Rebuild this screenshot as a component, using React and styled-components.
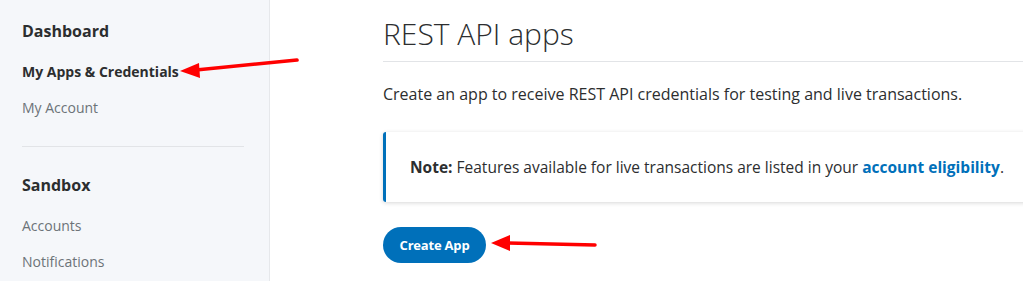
import styled, { createGlobalStyle } from "styled-components"

const GlobalStyle = createGlobalStyle`
    html, body {
        margin: 0;
        padding: 0;
        background: #ffffff;
    }
    body {
        font-family: "Open Sans", Lato, sans-serif;
        color: #2c2e2f;
        overflow: hidden;
    }
`

export default function App() {
    return (
        <Page>
            <GlobalStyle />

            <Sidebar>
                <NavGroup>
                    <NavTitle>Dashboard</NavTitle>
                    <NavLink $active>My Apps &amp; Credentials</NavLink>
                    <NavLink>My Account</NavLink>
                </NavGroup>
                <NavDivider />
                <NavGroup>
                    <NavTitle>Sandbox</NavTitle>
                    <NavLink>Accounts</NavLink>
                    <NavLink>Notifications</NavLink>
                </NavGroup>
            </Sidebar>

            <Main>
                <Title>REST API apps</Title>
                <Intro>Create an app to receive REST API credentials for testing and live transactions.</Intro>

                <NoteBox>
                    <strong>Note:</strong> Features available for live transactions are listed in your{" "}
                    <a>account eligibility</a>.
                </NoteBox>

                <CreateButton>Create App</CreateButton>
            </Main>

            <Annotations width="1023" height="281" viewBox="0 0 1023 281">
                <line x1="297" y1="60" x2="196" y2="70" stroke="#f00" strokeWidth="3.5" strokeLinecap="round" />
                <polygon points="180,71 199,63 200,78" fill="#f00" />
                <line x1="595" y1="245" x2="508" y2="243" stroke="#f00" strokeWidth="3.5" strokeLinecap="round" />
                <polygon points="491,243 510,235 510,251" fill="#f00" />
            </Annotations>
        </Page>
    )
}

const Page = styled.div`
    position: relative;
    display: flex;
    width: 1023px;
    height: 281px;
    overflow: hidden;
`

const Sidebar = styled.nav`
    width: 270px;
    flex-shrink: 0;
    background-color: #f5f7fa;
    border-right: 1px solid #e6e8eb;
    padding: 20px 25px 0 22px;
    box-sizing: border-box;
`

const NavGroup = styled.div`
    display: flex;
    flex-direction: column;
    align-items: flex-start;
`

const NavTitle = styled.div`
    font-size: 16px;
    font-weight: 700;
    color: #2c2e2f;
    line-height: 22px;
    margin-bottom: 20px;
`

const NavLink = styled.a`
    font-size: 14px;
    font-weight: ${p => (p.$active ? 700 : 400)};
    color: ${p => (p.$active ? "#2c2e2f" : "#6c7378")};
    line-height: 20px;
    margin-bottom: 16px;
    cursor: pointer;
`

const NavDivider = styled.hr`
    border: none;
    border-top: 1px solid #e2e4e7;
    margin: 12px 0 27px;
    width: 222px;
`

const Main = styled.main`
    flex: 1;
    padding: 16px 0 0 113px;
    display: flex;
    flex-direction: column;
    align-items: flex-start;
`

const Title = styled.h1`
    margin: 0;
    font-size: 30px;
    font-weight: 300;
    color: #2c2e2f;
    line-height: 36px;
    padding-bottom: 9px;
    border-bottom: 1px solid #e2e4e7;
    width: calc(100% + 20px);
`

const Intro = styled.p`
    margin: 22px 0 0;
    font-size: 16px;
    line-height: 20px;
    color: #2c2e2f;
`

const NoteBox = styled.div`
    margin-top: 28px;
    width: calc(100% + 20px);
    box-sizing: border-box;
    padding: 25px 24px;
    font-size: 15.5px;
    line-height: 20px;
    color: #2c2e2f;
    border-left: 3px solid #0070ba;
    border-radius: 3px 0 0 3px;
    box-shadow: 0 1px 4px rgba(0, 0, 0, 0.16);

    strong {
        font-weight: 700;
    }

    a {
        color: #0070ba;
        font-weight: 700;
        cursor: pointer;
    }
`

const CreateButton = styled.button`
    margin-top: 25px;
    height: 36px;
    width: 103px;
    border: none;
    border-radius: 18px;
    background-color: #0070ba;
    color: #ffffff;
    font-family: "Open Sans", Lato, sans-serif;
    font-size: 13px;
    font-weight: 700;
    letter-spacing: -0.2px;
    cursor: pointer;
`

const Annotations = styled.svg`
    position: absolute;
    top: 0;
    left: 0;
    pointer-events: none;
`
